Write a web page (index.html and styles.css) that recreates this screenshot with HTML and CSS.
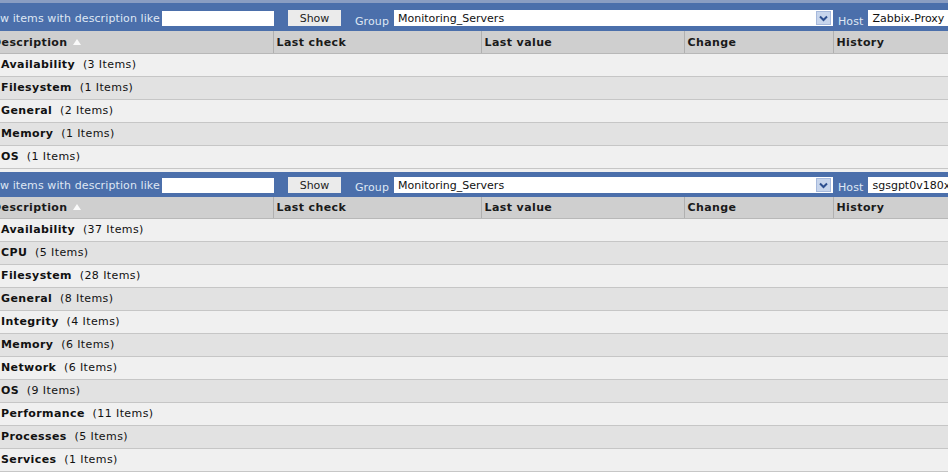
FILE: index.html
```html
<!DOCTYPE html>
<html lang="en">

<head>
  <meta charset="UTF-8">
  <title>Latest data</title>
  <link rel="stylesheet" href="styles.css">
</head>

<body>
  <div class="panel first">
    <form class="filterBar">
      <span class="lbl descLbl">Show items with description like</span>
      <input type="text" class="txt">
      <button type="button" class="btn">Show</button>
      <span class="lbl low">Group</span>
      <div class="combo group">
        <span>Monitoring_Servers</span>
        <span class="drop"><svg width="9" height="7" viewBox="0 0 9 7"><path d="M1 1.5 L4.5 5 L8 1.5" fill="none" stroke="#2d4f8f" stroke-width="2"/></svg></span>
      </div>
      <span class="lbl low">Host</span>
      <div class="combo host"><span>Zabbix-Proxy</span></div>
    </form>
    <table class="items">
      <thead>
        <tr>
          <th class="colDesc">Description <span class="sortUp"></span></th>
          <th class="colCheck">Last check</th>
          <th class="colValue">Last value</th>
          <th class="colChange">Change</th>
          <th>History</th>
        </tr>
      </thead>
      <tbody>
        <tr><td colspan="5"><b>Availability</b>&nbsp; (3 Items)</td></tr>
        <tr class="odd"><td colspan="5"><b>Filesystem</b>&nbsp; (1 Items)</td></tr>
        <tr><td colspan="5"><b>General</b>&nbsp; (2 Items)</td></tr>
        <tr class="odd"><td colspan="5"><b>Memory</b>&nbsp; (1 Items)</td></tr>
        <tr><td colspan="5"><b>OS</b>&nbsp; (1 Items)</td></tr>
      </tbody>
    </table>
  </div>

  <div class="panel second">
    <form class="filterBar">
      <span class="lbl descLbl">Show items with description like</span>
      <input type="text" class="txt">
      <button type="button" class="btn">Show</button>
      <span class="lbl low">Group</span>
      <div class="combo group">
        <span>Monitoring_Servers</span>
        <span class="drop"><svg width="9" height="7" viewBox="0 0 9 7"><path d="M1 1.5 L4.5 5 L8 1.5" fill="none" stroke="#2d4f8f" stroke-width="2"/></svg></span>
      </div>
      <span class="lbl low">Host</span>
      <div class="combo host"><span>sgsgpt0v180x01</span></div>
    </form>
    <table class="items">
      <thead>
        <tr>
          <th class="colDesc">Description <span class="sortUp"></span></th>
          <th class="colCheck">Last check</th>
          <th class="colValue">Last value</th>
          <th class="colChange">Change</th>
          <th>History</th>
        </tr>
      </thead>
      <tbody>
        <tr><td colspan="5"><b>Availability</b>&nbsp; (37 Items)</td></tr>
        <tr class="odd"><td colspan="5"><b>CPU</b>&nbsp; (5 Items)</td></tr>
        <tr><td colspan="5"><b>Filesystem</b>&nbsp; (28 Items)</td></tr>
        <tr class="odd"><td colspan="5"><b>General</b>&nbsp; (8 Items)</td></tr>
        <tr><td colspan="5"><b>Integrity</b>&nbsp; (4 Items)</td></tr>
        <tr class="odd"><td colspan="5"><b>Memory</b>&nbsp; (6 Items)</td></tr>
        <tr><td colspan="5"><b>Network</b>&nbsp; (6 Items)</td></tr>
        <tr class="odd"><td colspan="5"><b>OS</b>&nbsp; (9 Items)</td></tr>
        <tr><td colspan="5"><b>Performance</b>&nbsp; (11 Items)</td></tr>
        <tr class="odd"><td colspan="5"><b>Processes</b>&nbsp; (5 Items)</td></tr>
        <tr><td colspan="5"><b>Services</b>&nbsp; (1 Items)</td></tr>
      </tbody>
    </table>
  </div>
</body>

</html>
```

FILE: styles.css
```css
body {
  margin: 0;
  padding: 0;
  background-color: #f0f0f0;
  font-family: "DejaVu Sans", Verdana, sans-serif;
  font-size: 11px;
  color: #111;
  overflow: hidden;
}

.panel {
  width: 1000px;
}

.panel.first {
  border-top: 3px solid #8a9dc2;
}

.panel.second {
  margin-top: 3px;
}

/* Blue filter bar above each table */
.filterBar {
  display: flex;
  align-items: center;
  height: 28px;
  margin: 0;
  padding-top: 2px;
  background-color: #4b6fab;
  box-sizing: border-box;
}

.second .filterBar {
  height: 25px;
}

.lbl {
  color: #dfe7f4;
  white-space: nowrap;
  letter-spacing: 0.1px;
}

.lbl.low {
  align-self: flex-end;
  padding-bottom: 3px;
}

.descLbl {
  width: 183px;
  margin-left: -21px;
  flex: none;
}

.txt {
  width: 112px;
  height: 15px;
  padding: 0;
  margin: 0;
  border: none;
  background-color: #fff;
  box-sizing: border-box;
}

.btn {
  width: 53px;
  height: 16px;
  margin: 0 14px;
  padding: 0;
  border: none;
  background-color: #ebebeb;
  font-family: inherit;
  font-size: 11px;
  color: #222;
}

.combo {
  display: flex;
  align-items: center;
  height: 16px;
  background-color: #fff;
  color: #111;
  box-sizing: border-box;
  padding-left: 4px;
  white-space: nowrap;
  overflow: hidden;
}

.combo.group {
  width: 439px;
  margin: 0 5px 0 5px;
}

.combo.group span:first-child {
  flex: 1;
}

.combo.host {
  width: 120px;
  margin-left: 5px;
}

.drop {
  display: flex;
  align-items: center;
  justify-content: center;
  width: 15px;
  height: 14px;
  margin-right: 2px;
  background-color: #c7d5ec;
  border: 1px solid #a6b9dc;
  box-sizing: border-box;
}

/* Items table */
.items {
  width: 1000px;
  border-collapse: collapse;
  table-layout: fixed;
  letter-spacing: 0.4px;
}

.items th {
  height: 22px;
  padding: 1px 0 0 3px;
  background-color: #cfcfcf;
  border-bottom: 1px solid #b8b8b8;
  border-left: 1px solid #b0b0b0;
  text-align: left;
  font-weight: bold;
  color: #1a1a1a;
  box-sizing: border-box;
}

.items th.colDesc {
  width: 273px;
  border-left: none;
  text-indent: -11px;
}

.items th.colCheck {
  width: 208px;
}

.items th.colValue {
  width: 203px;
}

.items th.colChange {
  width: 149px;
}

.sortUp {
  display: inline-block;
  width: 0;
  height: 0;
  margin-left: 1px;
  border-left: 4px solid transparent;
  border-right: 4px solid transparent;
  border-bottom: 6px solid #fafafa;
  vertical-align: 1px;
}

.items td {
  height: 23px;
  padding: 0 0 1px 0;
  text-indent: 1px;
  background-color: #f0f0f0;
  border-bottom: 1px solid #c6c6c6;
  box-sizing: border-box;
  white-space: nowrap;
}

.items tr.odd td {
  background-color: #e2e2e2;
}

.items td b {
  color: #111;
}
```
